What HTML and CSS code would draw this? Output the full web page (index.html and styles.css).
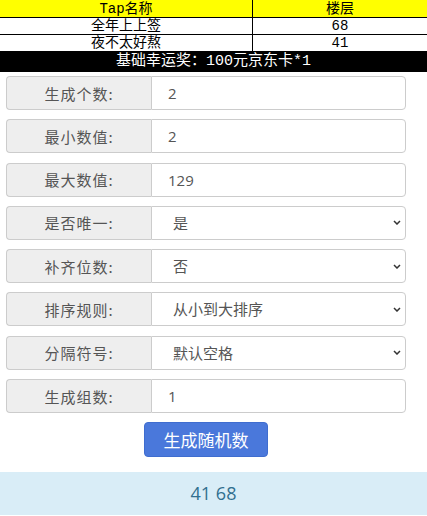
FILE: index.html
```html
<!DOCTYPE html>
<html lang="zh-CN">
<head>
    <meta charset="UTF-8">
    <meta name="viewport" content="width=device-width, initial-scale=1.0">
    <title>随机数生成</title>
    <link rel="stylesheet" href="styles.css">
</head>
<body>
<!--  lucky table  -->
<table class="lucky">
    <tr class="head">
        <td class="name">Tap名称</td>
        <td>楼层</td>
    </tr>
    <tr>
        <td class="name">全年上上签</td>
        <td>68</td>
    </tr>
    <tr>
        <td class="name">夜不太好熬</td>
        <td>41</td>
    </tr>
    <tr class="prize">
        <td colspan="2">基础幸运奖：100元京东卡*1</td>
    </tr>
</table>

<!--  form  -->
<div class="form">
    <div class="group">
        <span class="addon">生成个数:</span>
        <input class="field" type="text" value="2">
    </div>
    <div class="group">
        <span class="addon">最小数值:</span>
        <input class="field" type="text" value="2">
    </div>
    <div class="group">
        <span class="addon">最大数值:</span>
        <input class="field" type="text" value="129">
    </div>
    <div class="group">
        <span class="addon">是否唯一:</span>
        <select class="field">
            <option>是</option>
            <option>否</option>
        </select>
    </div>
    <div class="group">
        <span class="addon">补齐位数:</span>
        <select class="field">
            <option>否</option>
            <option>是</option>
        </select>
    </div>
    <div class="group">
        <span class="addon">排序规则:</span>
        <select class="field">
            <option>从小到大排序</option>
            <option>从大到小排序</option>
        </select>
    </div>
    <div class="group">
        <span class="addon">分隔符号:</span>
        <select class="field">
            <option>默认空格</option>
        </select>
    </div>
    <div class="group">
        <span class="addon">生成组数:</span>
        <input class="field" type="text" value="1">
    </div>
    <div class="actions">
        <button class="btn">生成随机数</button>
    </div>
</div>

<div class="result">41 68</div>
</body>
</html>
```

FILE: styles.css
```css
body {
margin:0;
padding:0;
background:#fff;
font-family: "Noto Sans CJK SC", "Liberation Sans", sans-serif;
}

/* top table, looks like a spreadsheet */
.lucky {
width:100%;
border-collapse:collapse;
font-family: "Liberation Mono", "Noto Sans CJK SC", monospace;
font-size:14px;
}
.lucky td {
height:16px;
padding:0;
line-height:16px;
text-align:center;
color:#000;
border-bottom:1px solid #000;
}
.lucky td.name {
width:252px;
border-right:1px solid #000;
}
.lucky tr.head td {
background:#ffff00;
height:17px;
}
.lucky tr.prize td {
background:#000;
color:#fff;
height:20px;
line-height:20px;
font-size:15px;
border:none;
}

/* input groups */
.form {
padding:4px 21px 0 6px;
}
.group {
display:flex;
height:34px;
margin-bottom:9.3px;
}
.addon {
width:144px;
flex:none;
display:flex;
align-items:center;
justify-content:center;
background:#eee;
border:1px solid #ccc;
border-right:none;
border-radius:4px 0 0 4px;
color:#555;
font-size:15px;
letter-spacing:1px;
}
.field {
flex:1;
min-width:0;
height:34px;
box-sizing:border-box;
margin:0;
padding:0 16px;
border:1px solid #ccc;
border-radius:0 4px 4px 0;
background:#fff;
color:#555;
font-family:"Open Sans", "Noto Sans CJK SC", sans-serif;
font-size:15px;
outline:none;
}
select.field {
appearance:none;
padding-left:21px;
background-image:url("data:image/svg+xml,%3Csvg xmlns='http://www.w3.org/2000/svg' width='8' height='5'%3E%3Cpath d='M1 1l3 3 3-3' fill='none' stroke='%23333' stroke-width='1.5'/%3E%3C/svg%3E");
background-repeat:no-repeat;
background-position:right 4px center;
}

/* button */
.actions {
display:flex;
justify-content:center;
}
.btn {
width:124px;
height:35px;
background:#4a78db;
border:1px solid #3f6dcf;
border-radius:4px;
color:#fff;
font-family:inherit;
font-size:17px;
cursor:pointer;
}

/* result bar */
.result {
margin-top:15px;
height:43px;
line-height:43px;
background:#d9edf7;
color:#31708f;
text-align:center;
font-family:"Open Sans", sans-serif;
font-size:18px;
}
```
